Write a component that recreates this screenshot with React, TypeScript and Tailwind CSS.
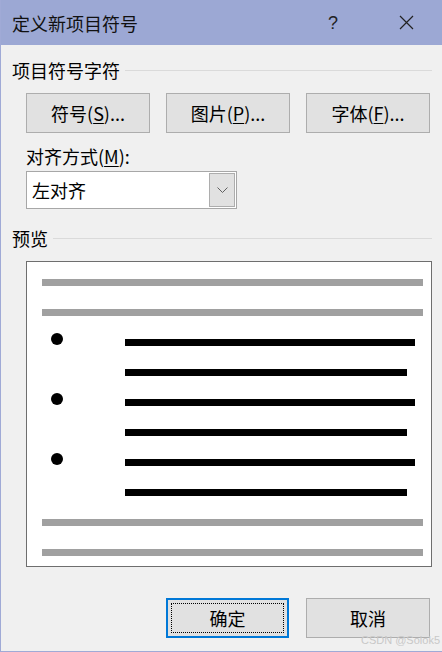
import React from "react";

const F = "font-['Noto_Sans_CJK_SC','Noto_Sans',sans-serif]";

function Btn({ children, focus }: { children: React.ReactNode; focus?: boolean }) {
  if (focus) {
    return (
      <div className="w-[123px] h-[40px] border-2 border-[#0078d7] bg-[#e1e1e1] p-[3px]">
        <div className="w-full h-full border border-dotted border-black flex items-center justify-center text-[18px] leading-none text-black">
          {children}
        </div>
      </div>
    );
  }
  return (
    <div className="w-[124px] h-[40px] border border-[#adadad] bg-[#e1e1e1] flex items-center justify-center text-[18px] leading-none text-black">
      {children}
    </div>
  );
}

function Gray() {
  return <div className="h-[7px] w-[381px] bg-[#a0a0a0]" />;
}

function Black({ w }: { w: number }) {
  return <div className="h-[7px] bg-black" style={{ width: w }} />;
}

function BulletGroup() {
  return (
    <>
      <div className="flex items-start">
        <div className="w-[83px]">
          <div className="ml-[9px] -mt-[6px] w-[12px] h-[12px] rounded-full bg-black" />
        </div>
        <Black w={290} />
      </div>
      <div className="flex items-start">
        <div className="w-[83px]" />
        <Black w={282} />
      </div>
    </>
  );
}

export default function App() {
  return (
    <div className={`${F} relative w-[442px] h-[652px] bg-[#f0f0f0] border-l border-b border-[#a0aad6] text-black overflow-hidden`}>
      {/* title bar */}
      <div className="h-[45px] bg-[#9ca8d4] flex items-center">
        <div className="ml-[11px] text-[18px] leading-none text-[#111]">定义新项目符号</div>
        <div className="ml-auto mr-[61px] text-[18px] leading-none text-[#222] font-['Liberation_Sans',sans-serif] font-light">?</div>
        <svg width="15" height="15" viewBox="0 0 15 15" className="mr-[28px]">
          <path d="M1 1 L14 14 M14 1 L1 14" stroke="#222" strokeWidth="1.2" fill="none" />
        </svg>
      </div>

      {/* section 1 heading */}
      <div className="mt-[13px] flex items-center pl-[11px] pr-[10px] h-[24px]">
        <span className="text-[18px] leading-none">项目符号字符</span>
        <div className="flex-1 ml-[5px] h-px bg-[#dadada]" />
      </div>

      <div className="mt-[11px] pl-[25px] flex gap-[16px]">
        <Btn>符号(<span className="underline underline-offset-2">S</span>)...</Btn>
        <Btn>图片(<span className="underline underline-offset-2">P</span>)...</Btn>
        <Btn>字体(<span className="underline underline-offset-2">F</span>)...</Btn>
      </div>

      <div className="mt-[11px] pl-[25px] h-[24px] flex items-center text-[18px] leading-none">
        对齐方式(<span className="underline underline-offset-2">M</span>):
      </div>

      <div className="mt-[3px] ml-[25px] w-[211px] h-[38px] border border-[#a7a7a7] bg-white flex items-center p-px">
        <span className="ml-[4px] text-[18px] leading-none">左对齐</span>
        <div className="ml-auto w-[26px] h-full border border-[#adadad] bg-[#e1e1e1] flex items-center justify-center">
          <svg width="11" height="6" viewBox="0 0 11 6">
            <path d="M0.5 0.5 L5.5 5.5 L10.5 0.5" stroke="#606060" strokeWidth="1" fill="none" />
          </svg>
        </div>
      </div>

      {/* section 2 heading */}
      <div className="mt-[17px] flex items-center pl-[11px] pr-[10px] h-[24px]">
        <span className="text-[18px] leading-none">预览</span>
        <div className="flex-1 ml-[5px] h-px bg-[#dadada]" />
      </div>

      <div className="mt-[11px] ml-[25px] w-[406px] h-[306px] border border-[#6e6e6e] bg-white pt-[17px] pl-[15px] flex flex-col gap-[23px]">
        <Gray />
        <Gray />
        <BulletGroup />
        <BulletGroup />
        <BulletGroup />
        <Gray />
        <Gray />
      </div>

      <div className="mt-[31px] flex justify-end gap-[17px] pr-[12px]">
        <Btn focus>确定</Btn>
        <Btn>取消</Btn>
      </div>

      <div className="absolute right-[2px] bottom-[5px] text-[11px] leading-none text-[#c8c8c8] font-['Liberation_Sans',sans-serif]">
        CSDN @Solok5
      </div>
    </div>
  );
}
